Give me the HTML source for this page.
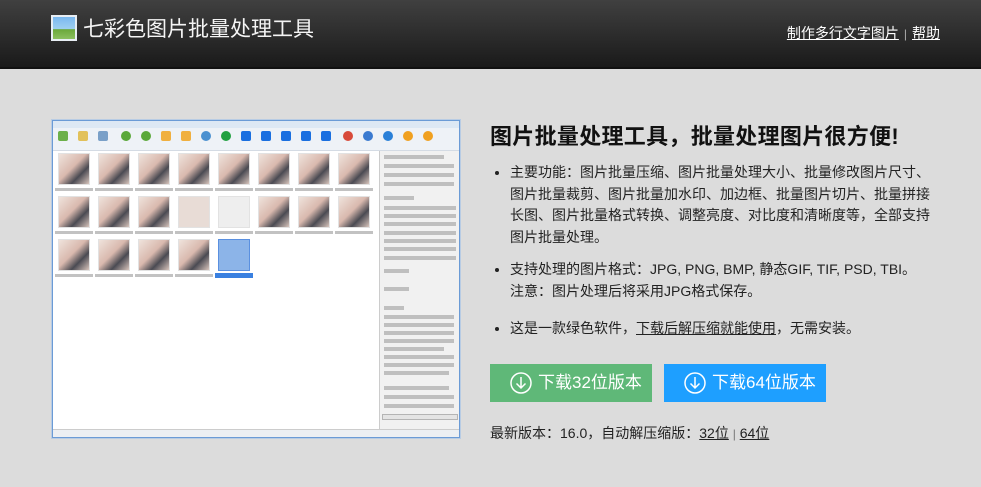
<!DOCTYPE html>
<html><head><meta charset="utf-8"><style>
*{margin:0;padding:0;box-sizing:border-box}
body{width:981px;height:487px;overflow:hidden;background:#dcdcdc;font-family:"Liberation Sans","Noto Sans CJK SC",sans-serif;position:relative}
.hdr{position:absolute;left:0;top:0;width:981px;height:69px;background:linear-gradient(#404040,#1a1a1a);border-bottom:2px solid #111}
.hdr .logo{position:absolute;left:51px;top:15px;width:26px;height:26px;background:linear-gradient(#7ab8f0 0,#9fd0f0 55%,#6aa83a 56%,#8cc060 100%);border:2px solid #e8eef4}
.hdr .t{position:absolute;left:83px;top:13px;color:#f4f4f4;font-size:21px;letter-spacing:0}
.hdr .lk{position:absolute;right:41px;top:23px;color:#fff;font-size:14px}
.hdr .lk u{text-decoration:underline}
.hdr .lk span{color:#aaa;margin:0 5px;font-size:12px}
.win{position:absolute;left:52px;top:120px;width:408px;height:318px;background:#fff;border:1px solid #6b9bd6;box-shadow:0 0 0 1px #b8cce4}
.tb{position:absolute;left:0;top:0;width:100%;height:7px;background:#dde8f4}
.tool{position:absolute;left:0;top:7px;width:100%;height:23px;background:#eef2f7;border-bottom:1px solid #d4dbe4}
.ic{position:absolute;top:3px;width:10px;height:10px;border-radius:2px}
.th{position:absolute;width:32px;height:32px;background:linear-gradient(135deg,#efe3dc 0,#d9b9ae 45%,#4a4a52 70%,#d8c4bc 100%);border:1px solid #e2e2e2}
.lb{position:absolute;width:38px;height:3px;background:#9a9a9a;opacity:.6}
.rp{position:absolute;left:326px;top:30px;width:80px;height:280px;background:#f1f1f1;border-left:1px solid #ccc}
.rr{position:absolute;left:4px;height:4px;background:#bfbfbf}
.sb{position:absolute;left:0;bottom:0;width:100%;height:8px;background:#eceff3;border-top:1px solid #ccc}
h1{position:absolute;left:490px;top:119px;font-size:22px;font-weight:bold;color:#111;letter-spacing:0.3px}
ul{position:absolute;left:494px;top:162px;width:446px;list-style:none;font-size:14px;color:#222;line-height:21.5px}
li{position:relative;padding-left:16px;margin-bottom:11px}
li.m2{margin-bottom:16px}
li:before{content:"";position:absolute;left:1px;top:9px;width:4px;height:4px;border-radius:50%;background:#222}
li u{text-decoration:underline}
.btn{position:absolute;top:364px;width:162px;height:38px;color:#fff;font-size:17px;line-height:38px;padding-left:48px}
.btn svg{position:absolute;left:20px;top:8px}
.g{left:490px;background:#5fb878}.b{left:664px;background:#1e9fff}
.ver{position:absolute;left:490px;top:423px;font-size:14px;color:#222}
.ver u{text-decoration:underline}
</style></head><body>
<div class="hdr"><div class="logo"></div><div class="t">七彩色图片批量处理工具</div>
<div class="lk"><u>制作多行文字图片</u><span>|</span><u>帮助</u></div></div>

<div class="win">
<div class="tb"></div>
<div class="tool">
<div class="ic" style="left:5px;background:#6cb04a"></div><div class="ic" style="left:25px;background:#e2c15a"></div><div class="ic" style="left:45px;background:#7aa0c8"></div>
<div class="ic" style="left:68px;background:#5aa83a;border-radius:50%"></div><div class="ic" style="left:88px;background:#5aa83a;border-radius:50%"></div><div class="ic" style="left:108px;background:#f0b040"></div><div class="ic" style="left:128px;background:#f0b040"></div>
<div class="ic" style="left:148px;background:#4a90d0;border-radius:50%"></div><div class="ic" style="left:168px;background:#20a040;border-radius:50%"></div>
<div class="ic" style="left:188px;background:#1a6fe0"></div><div class="ic" style="left:208px;background:#1a6fe0"></div><div class="ic" style="left:228px;background:#1a6fe0"></div><div class="ic" style="left:248px;background:#1a6fe0"></div><div class="ic" style="left:268px;background:#1a6fe0"></div>
<div class="ic" style="left:290px;background:#d84a3a;border-radius:50%"></div><div class="ic" style="left:310px;background:#3a7ad0;border-radius:50%"></div><div class="ic" style="left:330px;background:#2a80d8;border-radius:50%"></div><div class="ic" style="left:350px;background:#f0a020;border-radius:50%"></div><div class="ic" style="left:370px;background:#f0a020;border-radius:50%"></div>
</div>
<div class="th" style="left:5px;top:32px"></div><div class="th" style="left:45px;top:32px"></div><div class="th" style="left:85px;top:32px"></div><div class="th" style="left:125px;top:32px"></div><div class="th" style="left:165px;top:32px"></div><div class="th" style="left:205px;top:32px"></div><div class="th" style="left:245px;top:32px"></div><div class="th" style="left:285px;top:32px"></div>
<div class="lb" style="left:2px;top:67px"></div><div class="lb" style="left:42px;top:67px"></div><div class="lb" style="left:82px;top:67px"></div><div class="lb" style="left:122px;top:67px"></div><div class="lb" style="left:162px;top:67px"></div><div class="lb" style="left:202px;top:67px"></div><div class="lb" style="left:242px;top:67px"></div><div class="lb" style="left:282px;top:67px"></div>
<div class="th" style="left:5px;top:75px"></div><div class="th" style="left:45px;top:75px"></div><div class="th" style="left:85px;top:75px"></div><div class="th" style="left:125px;top:75px;background:#e8dcd6"></div><div class="th" style="left:165px;top:75px;background:#eeeeee"></div><div class="th" style="left:205px;top:75px"></div><div class="th" style="left:245px;top:75px"></div><div class="th" style="left:285px;top:75px"></div>
<div class="lb" style="left:2px;top:110px"></div><div class="lb" style="left:42px;top:110px"></div><div class="lb" style="left:82px;top:110px"></div><div class="lb" style="left:122px;top:110px"></div><div class="lb" style="left:162px;top:110px"></div><div class="lb" style="left:202px;top:110px"></div><div class="lb" style="left:242px;top:110px"></div><div class="lb" style="left:282px;top:110px"></div>
<div class="th" style="left:5px;top:118px"></div><div class="th" style="left:45px;top:118px"></div><div class="th" style="left:85px;top:118px"></div><div class="th" style="left:125px;top:118px"></div><div class="th" style="left:165px;top:118px;background:#8cb4e8;border-color:#5a90e0"></div>
<div class="lb" style="left:2px;top:153px"></div><div class="lb" style="left:42px;top:153px"></div><div class="lb" style="left:82px;top:153px"></div><div class="lb" style="left:122px;top:153px"></div><div class="lb" style="left:162px;top:152px;height:5px;background:#3a80e0;opacity:1"></div>
<div class="rp">
<div class="rr" style="top:4px;width:60px"></div><div class="rr" style="top:13px;width:70px"></div><div class="rr" style="top:22px;width:70px"></div><div class="rr" style="top:31px;width:70px"></div>
<div class="rr" style="top:45px;width:30px"></div><div class="rr" style="top:55px;width:72px"></div><div class="rr" style="top:63px;width:72px"></div><div class="rr" style="top:71px;width:72px"></div><div class="rr" style="top:80px;width:72px"></div><div class="rr" style="top:88px;width:72px"></div><div class="rr" style="top:96px;width:72px"></div><div class="rr" style="top:105px;width:72px"></div>
<div class="rr" style="top:118px;width:25px"></div><div class="rr" style="top:136px;width:25px"></div>
<div class="rr" style="top:155px;width:20px"></div><div class="rr" style="top:164px;width:70px"></div><div class="rr" style="top:172px;width:70px"></div><div class="rr" style="top:180px;width:70px"></div><div class="rr" style="top:188px;width:70px"></div><div class="rr" style="top:196px;width:60px"></div><div class="rr" style="top:204px;width:70px"></div><div class="rr" style="top:212px;width:70px"></div><div class="rr" style="top:220px;width:65px"></div>
<div class="rr" style="top:235px;width:65px"></div><div class="rr" style="top:244px;width:70px"></div><div class="rr" style="top:253px;width:70px"></div>
<div style="position:absolute;left:2px;top:263px;width:76px;height:6px;background:#e4e4e4;border:1px solid #b4b4b4"></div>
</div>
<div class="sb"></div>
</div>

<h1>图片批量处理工具，批量处理图片很方便!</h1>
<ul>
<li>主要功能：图片批量压缩、图片批量处理大小、批量修改图片尺寸、图片批量裁剪、图片批量加水印、加边框、批量图片切片、批量拼接长图、图片批量格式转换、调整亮度、对比度和清晰度等，全部支持图片批量处理。</li>
<li class="m2">支持处理的图片格式：JPG, PNG, BMP, 静态GIF, TIF, PSD, TBI。<br>注意：图片处理后将采用JPG格式保存。</li>
<li>这是一款绿色软件，<u>下载后解压缩就能使用</u>，无需安装。</li>
</ul>
<div class="btn g"><svg width="22" height="22" viewBox="0 0 22 22" fill="none" stroke="#fff" stroke-width="1.5"><circle cx="11" cy="11" r="10"/><path d="M11 5v11M6.5 11.5L11 16l4.5-4.5"/></svg>下载32位版本</div>
<div class="btn b"><svg width="22" height="22" viewBox="0 0 22 22" fill="none" stroke="#fff" stroke-width="1.5"><circle cx="11" cy="11" r="10"/><path d="M11 5v11M6.5 11.5L11 16l4.5-4.5"/></svg>下载64位版本</div>
<div class="ver">最新版本：16.0，自动解压缩版：<u>32位</u> <span style="color:#777;font-size:12px">|</span> <u>64位</u></div>
</body></html>
